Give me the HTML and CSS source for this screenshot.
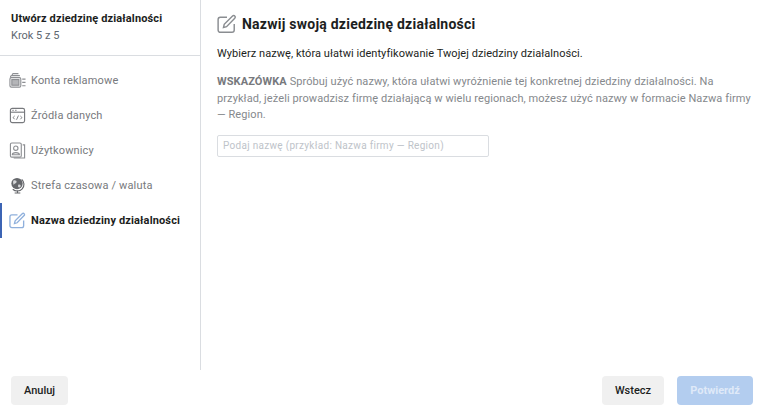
FILE: index.html
```html
<!DOCTYPE html>
<html lang="pl">
<head>
<meta charset="utf-8">
<title>Utwórz dziedzinę działalności</title>
<link rel="stylesheet" href="styles.css">
</head>
<body>
<div class="app">
  <div class="main">
    <aside class="side">
      <header class="side-head">
        <div class="side-title">Utwórz dziedzinę działalności</div>
        <div class="side-step">Krok 5 z 5</div>
      </header>
      <nav class="steps">
        <div class="step">
          <svg class="ico" viewBox="0 0 18 18" fill="none" stroke="#8d8f93" stroke-width="1.2">
            <path d="M3.500 4V2.700C3.500 2.200 4 1.700 4.500 1.700H10"/><path d="M1.700 6V4.800C1.700 4.200 2.200 3.800 2.800 3.800H11.500"/>
            <rect x="1" y="6" width="11.500" height="10" rx="1.500"/><rect x="3" y="8" width="7.500" height="6" fill="#77797d" fill-opacity=".55"/>
            <path d="M14 7.500H17.500M14 11H17.500M14 14.500H17.500"/>
          </svg>
          <span>Konta reklamowe</span>
        </div>
        <div class="step">
          <svg class="ico" viewBox="0 0 18 18" fill="none" stroke="#77797d" stroke-width="1.200">
            <rect x="1.500" y="1.500" width="15" height="15" rx="2"/><path d="M1.500 5.500H16.500"/>
            <path d="M3.500 3.500H5M6.500 3.500H8" stroke-width="1"/>
            <path d="M6 9.500L4.300 11.200L6 13M12 9.500L13.700 11.200L12 13M10 9L8 13.500" stroke-width="1"/>
          </svg>
          <span>Źródła danych</span>
        </div>
        <div class="step">
          <svg class="ico" viewBox="0 0 18 18" fill="none" stroke="#8d8f93" stroke-width="1.200">
            <rect x="1.500" y="1" width="11.500" height="15" rx="1.500"/><path d="M14.500 3H16.500V17H5"/>
            <circle cx="7.200" cy="6.500" r="2.300"/><path d="M3.500 13.500C3.500 10.500 11 10.500 11 13.500Z"/>
          </svg>
          <span>Użytkownicy</span>
        </div>
        <div class="step">
          <svg class="ico" viewBox="0 0 18 18" fill="none">
            <circle cx="8.500" cy="7" r="6" fill="#65676b"/>
            <path d="M5 3.500C7 3 8.500 4 8 5.500C7.500 7 5.500 6.500 5 8.500C4.500 6.500 3.700 5 5 3.500ZM10 8C12 7.500 13 8.500 12 10.500C11 11.500 9.500 11 9.500 9.500Z" fill="#d5d6d8"/>
            <path d="M13.500 2.500A7 7 0 0 1 4 13M9 14V17M6 17H12" stroke="#65676b" stroke-width="1.200"/>
          </svg>
          <span>Strefa czasowa / waluta</span>
        </div>
        <div class="step step-active">
          <svg class="ico" viewBox="0 0 18 18" fill="none" stroke="#8fb0dc" stroke-width="1.400">
            <path d="M15.500 9V14.500C15.500 15.600 14.600 16.500 13.500 16.500H3C1.900 16.500 1 15.600 1 14.500V5C1 3.900 1.900 3 3 3H9"/>
            <path d="M5.800 12.200L6.500 9.300L14 1.800C14.600 1.200 15.500 1.200 16 1.800C16.600 2.400 16.600 3.200 16 3.800L8.600 11.400Z"/>
          </svg>
          <span>Nazwa dziedziny działalności</span>
        </div>
      </nav>
    </aside>
    <section class="content">
      <div class="heading">
        <svg class="heading-ico" viewBox="0 0 18 18" fill="none" stroke="#8a8d91" stroke-width="1.300">
          <path d="M15.500 9V14.500C15.500 15.600 14.600 16.500 13.500 16.500H3C1.900 16.500 1 15.600 1 14.500V5C1 3.900 1.900 3 3 3H9"/>
          <path d="M5.800 12.200L6.500 9.300L14 1.800C14.600 1.200 15.500 1.200 16 1.800C16.600 2.400 16.600 3.200 16 3.800L8.600 11.400Z"/>
        </svg>
        <h1>Nazwij swoją dziedzinę działalności</h1>
      </div>
      <p class="lead">Wybierz nazwę, która ułatwi identyfikowanie Twojej dziedziny działalności.</p>
      <p class="tip"><b>WSKAZÓWKA</b> Spróbuj użyć nazwy, która ułatwi wyróżnienie tej konkretnej dziedziny działalności. Na przykład, jeżeli prowadzisz firmę działającą w wielu regionach, możesz użyć nazwy w formacie Nazwa firmy — Region.</p>
      <input class="name" type="text" placeholder="Podaj nazwę (przykład: Nazwa firmy — Region)">
    </section>
  </div>
  <footer class="foot">
    <button class="btn">Anuluj</button>
    <div class="foot-right">
      <button class="btn btn-back">Wstecz</button>
      <button class="btn btn-primary">Potwierdź</button>
    </div>
  </footer>
</div>
</body>
</html>
```
FILE: styles.css
```css
* { box-sizing: border-box; }
html, body { margin: 0; height: 100%; }
body { font-family: Roboto, "Liberation Sans", sans-serif; font-size: 11px; color: #1c1e21; background: #fff; }
.app { width: 763px; height: 409px; display: flex; flex-direction: column; overflow: hidden; }
.main { height: 370px; display: flex; }
.side { width: 201px; border-right: 1px solid #dadde1; flex: none; }
.side-head { height: 56px; border-bottom: 1px solid #dadde1; padding: 12px 11px 0; }
.side-title { font-weight: 700; line-height: 14px; letter-spacing: .14px; }
.side-step { color: #606770; line-height: 14px; margin-top: 3px; }
.steps { padding-top: 7px; }
.step { height: 35px; display: flex; align-items: center; gap: 5px; padding-left: 9px; color: #77797d; letter-spacing: .15px; }
.ico { width: 17px; height: 17px; flex: none; }
.step-active { color: #1c1e21; font-weight: 700; box-shadow: inset 2px 0 0 #3c64b4; letter-spacing: .14px; }
.content { flex: 1; padding: 13px 10px 0 16px; }
.heading { display: flex; align-items: center; gap: 5px; height: 22px; }
.heading-ico { width: 20px; height: 20px; flex: none; }
h1 { margin: 0; font-size: 14px; font-weight: 700; line-height: 20px; letter-spacing: .24px; color: #1c1e21; }
.lead { margin: 11px 0 0; line-height: 16px; letter-spacing: .055px; color: #1c1e21; }
.tip { margin: 12px 0 0; line-height: 16.500px; letter-spacing: .09px; color: #85888c; }
.tip b { color: #77797d; font-weight: 700; letter-spacing: .1px; }
.name { display: block; margin-top: 11px; width: 272px; height: 22px; border: 1px solid #dadde1; border-radius: 2px; padding: 0 5px; font: 10px Roboto, sans-serif; letter-spacing: .03em; background: #fff; outline: 0; }
.name::placeholder { color: #bec3c9; opacity: 1; }
.foot { flex: 1; display: flex; justify-content: space-between; align-items: flex-start; padding: 6px 10px 0 11px; }
.foot-right { display: flex; gap: 13px; }
.btn { height: 29px; width: 57px; border: 0; border-radius: 4px; background: #f0f0f0; color: #1c1e21; font: 500 11px Roboto, sans-serif; padding: 0; }
.btn-back { width: 62px; }
.btn-primary { width: 76px; background: #b3cdef; color: #dfe9f8; font-weight: 700; }
```
